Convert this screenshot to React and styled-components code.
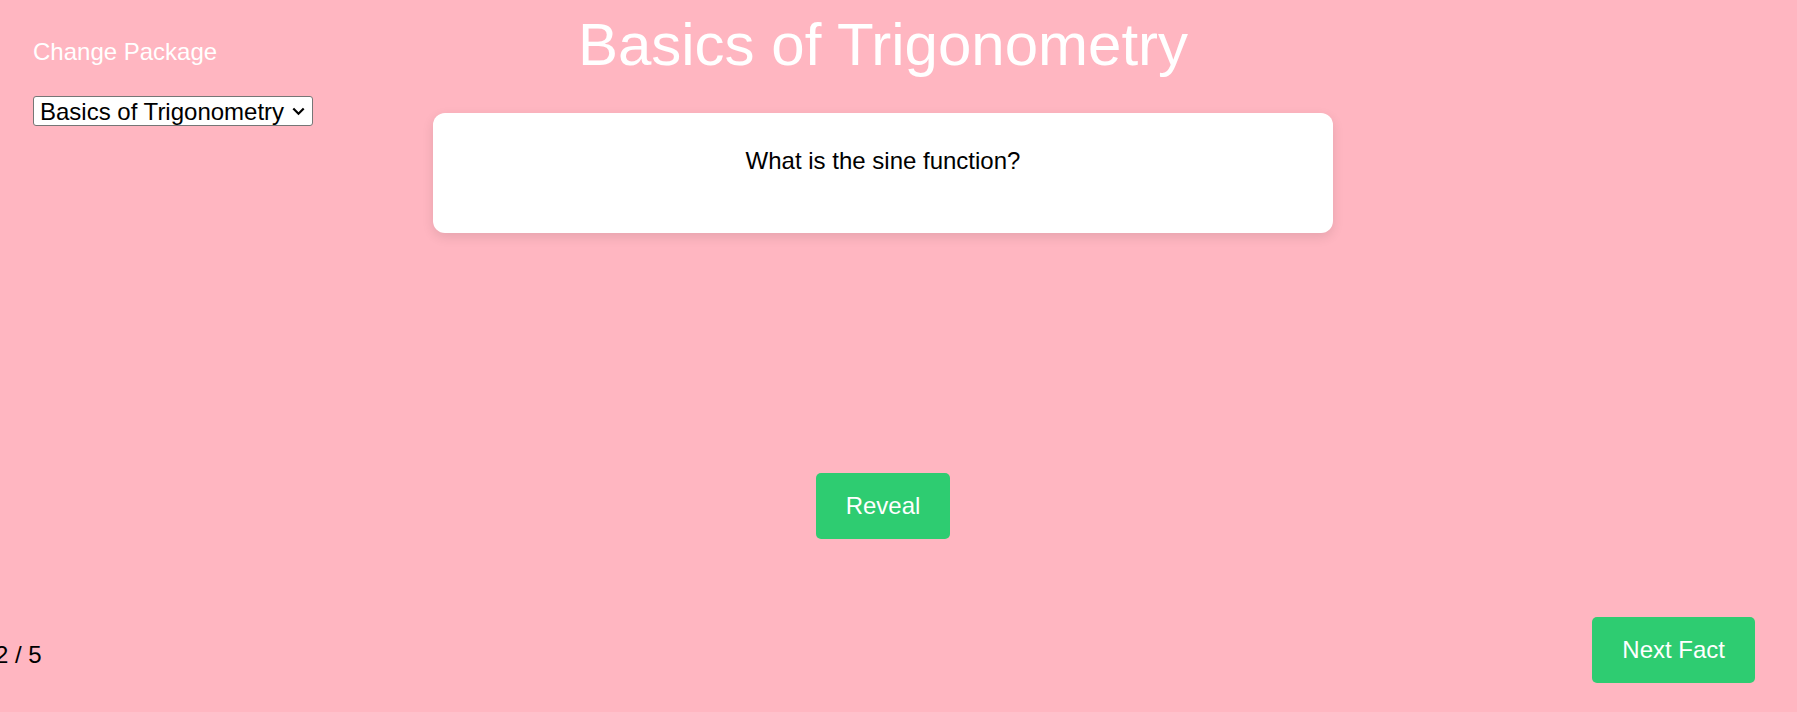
import styled, { createGlobalStyle } from 'styled-components';

const GlobalStyle = createGlobalStyle`
    body {
        margin: 0;
        font-family: "Liberation Sans", Arial, sans-serif;
    }
`

const Page = styled.div`
    display: flex;
    flex-direction: column;
    height: 712px;
    overflow: hidden;
    background-color: #ffb6c1;
    padding-top: 12px;
    box-sizing: border-box;
`

const TopArea = styled.div`
    display: grid;
    grid-template-columns: 1fr 900px 1fr;
    padding-right: 31px;
`

const Sidebar = styled.aside`
    display: flex;
    flex-direction: column;
    align-items: flex-start;
    gap: 30px;
    padding: 26px 0 0 33px;
`

const SidebarTitle = styled.div`
    font-size: 24px;
    line-height: 28px;
    color: white;
`

const SelectWrap = styled.div`
    position: relative;
    width: 280px;
    height: 30px;
`

const PackageSelect = styled.select`
    appearance: none;
    width: 100%;
    height: 100%;
    box-sizing: border-box;
    font-family: "Liberation Sans", Arial, sans-serif;
    font-size: 24px;
    color: black;
    background-color: white;
    border: 1px solid #767676;
    border-radius: 3px;
    padding: 0 0 0 6px;
    outline: none;
`

const Chevron = styled.svg`
    position: absolute;
    right: 8px;
    top: 11px;
    pointer-events: none;
`

const Main = styled.main`
    display: flex;
    flex-direction: column;
    align-items: center;
`

const Title = styled.h1`
    margin: 0;
    font-size: 60px;
    line-height: 66px;
    font-weight: normal;
    color: white;
    text-align: center;
    white-space: nowrap;
`

const Card = styled.div`
    width: 100%;
    height: 120px;
    box-sizing: border-box;
    margin-top: 35px;
    padding-top: 34px;
    background-color: white;
    border-radius: 12px;
    box-shadow: 0 4px 12px rgba(0, 0, 0, 0.1);
    text-align: center;
`

const Question = styled.p`
    margin: 0;
    font-size: 24px;
    line-height: 28px;
    color: black;
`

const Button = styled.button`
    margin-top: ${props => props.$top || 0}px;
    padding: 19px 30px;
    border: none;
    border-radius: 5px;
    background-color: #2ecc71;
    color: white;
    font-family: "Liberation Sans", Arial, sans-serif;
    font-size: 24px;
    line-height: 28px;
    cursor: pointer;
`

const Footer = styled.footer`
    margin-top: auto;
    display: flex;
    justify-content: space-between;
    align-items: flex-end;
    padding: 0 42px 29px 0;
`

const Counter = styled.div`
    margin: 0 0 14px -5px;
    font-size: 24px;
    line-height: 28px;
    color: black;
`

function App() {
    return (
        <>
            <GlobalStyle />
            <Page>
                <TopArea>
                    <Sidebar>
                        <SidebarTitle>Change Package</SidebarTitle>
                        <SelectWrap>
                            <PackageSelect defaultValue="trig">
                                <option value="trig">Basics of Trigonometry</option>
                            </PackageSelect>
                            <Chevron width="13" height="9" viewBox="0 0 13 9">
                                <path d="M1.3 1.5 L6.5 6.7 L11.7 1.5" fill="none" stroke="black" strokeWidth="2.2" />
                            </Chevron>
                        </SelectWrap>
                    </Sidebar>
                    <Main>
                        <Title>Basics of Trigonometry</Title>
                        <Card>
                            <Question>What is the sine function?</Question>
                        </Card>
                        <Button $top={240}>Reveal</Button>
                    </Main>
                </TopArea>
                <Footer>
                    <Counter>2 / 5</Counter>
                    <Button>Next Fact</Button>
                </Footer>
            </Page>
        </>
    )
}

export default App;
